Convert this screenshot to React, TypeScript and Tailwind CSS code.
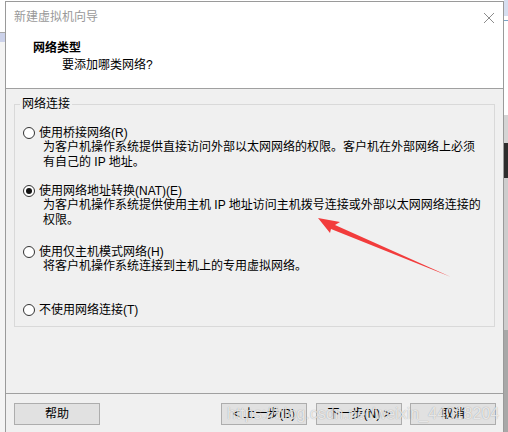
import React from "react";

const font = { fontFamily: '"Liberation Sans", "Noto Sans CJK SC", sans-serif' };

function Radio({ checked }: { checked?: boolean }) {
  return (
    <span className="w-[12px] h-[12px] rounded-full border border-[#333333] bg-white flex items-center justify-center shrink-0">
      {checked ? <span className="w-[6px] h-[6px] rounded-full bg-[#111111]" /> : null}
    </span>
  );
}

function Option({
  label,
  lines,
  checked,
  mt,
}: {
  label: string;
  lines: string[];
  checked?: boolean;
  mt: string;
}) {
  return (
    <div className={`flex flex-col ${mt}`}>
      <div className="flex items-center gap-[4px] h-[14px]">
        <Radio checked={checked} />
        <span className="text-[12px] leading-[14px] text-black whitespace-nowrap">{label}</span>
      </div>
      {lines.map((l, i) => (
        <div key={i} className="ml-[20px] text-[12px] leading-[15px] text-black whitespace-nowrap">
          {l}
        </div>
      ))}
    </div>
  );
}

function Btn({ children }: { children: React.ReactNode }) {
  return (
    <div className="w-[86px] h-[22px] border border-[#adadad] bg-[#e1e1e1] flex items-center justify-center text-[12px] text-black whitespace-nowrap">
      {children}
    </div>
  );
}

export default function App() {
  return (
    <div className="relative w-[508px] h-[432px] overflow-hidden flex bg-white" style={font}>
      {/* left background strip */}
      <div className="w-[5px] h-[432px] flex flex-col shrink-0">
        <div className="h-[32px] bg-white" />
        <div className="h-[1px] bg-[#a8a8a8]" />
        <div className="h-[9px] bg-[#ccd2ea]" />
        <div className="flex-1 bg-[#f4f4f4]" />
      </div>

      {/* dialog */}
      <div className="w-[499px] h-[431px] mt-[1px] border-l border-r border-t border-[#9a9a9a] flex flex-col shrink-0">
        {/* title bar */}
        <div className="h-[31px] bg-white flex items-center justify-between pl-[8px] pr-[8px]">
          <span className="text-[12px] leading-[15px] text-[#999999]">新建虚拟机向导</span>
          <svg width="12" height="12" viewBox="0 0 12 12">
            <path d="M1 1 L11 11 M11 1 L1 11" stroke="#8c8c8c" strokeWidth="1" fill="none" />
          </svg>
        </div>

        {/* header */}
        <div className="h-[56px] bg-white border-b border-[#a0a0a0] flex flex-col pt-[8px]">
          <div className="pl-[27px] text-[12px] leading-[15px] font-bold text-black">网络类型</div>
          <div className="pl-[56px] mt-[2px] text-[12px] leading-[15px] text-black">要添加哪类网络?</div>
        </div>

        {/* body */}
        <div className="h-[304px] bg-[#f0f0f0] flex flex-col">
          <fieldset className="mt-[8px] mx-[8px] border border-[#d9d9d9]">
            <legend className="ml-[5px] px-[2px] text-[12px] leading-[15px] text-black">网络连接</legend>
            <div className="flex flex-col pl-[8px] pb-[9px]">
              <Option
                mt="mt-[14px]"
                label="使用桥接网络(R)"
                lines={[
                  "为客户机操作系统提供直接访问外部以太网网络的权限。客户机在外部网络上必须",
                  "有自己的 IP 地址。",
                ]}
              />
              <Option
                mt="mt-[14px]"
                checked
                label="使用网络地址转换(NAT)(E)"
                lines={[
                  "为客户机操作系统提供使用主机 IP 地址访问主机拨号连接或外部以太网网络连接的",
                  "权限。",
                ]}
              />
              <Option
                mt="mt-[17px]"
                label="使用仅主机模式网络(H)"
                lines={["将客户机操作系统连接到主机上的专用虚拟网络。"]}
              />
              <Option mt="mt-[29px]" label="不使用网络连接(T)" lines={[]} />
            </div>
          </fieldset>
        </div>

        {/* footer */}
        <div className="h-[39px] bg-[#f0f0f0] border-t border-[#a0a0a0] flex items-start pt-[9px] pl-[8px] pr-[7px]">
          <Btn>帮助</Btn>
          <div className="flex-1" />
          <div className="flex gap-[9px]">
            <Btn>&lt; 上一步(B)</Btn>
            <div className="flex gap-[8px]">
              <Btn>下一步(N) &gt;</Btn>
              <Btn>取消</Btn>
            </div>
          </div>
        </div>
      </div>

      {/* right background strip */}
      <div className="w-[4px] h-[432px] flex flex-col shrink-0">
        <div className="h-[16px] bg-[#d6def0]" />
        <div className="h-[4px] bg-white" />
        <div className="h-[1px] bg-[#7ba5c5]" />
        <div className="h-[94px] bg-white" />
        <div className="h-[28px] bg-[#d4d4d4]" />
        <div className="h-[35px] bg-[#2d2d2d]" />
        <div className="h-[152px] bg-[#cdcdcd]" />
        <div className="flex-1 bg-[#a8a8a8]" />
      </div>

      {/* red annotation arrow */}
      <svg className="absolute left-0 top-0 pointer-events-none" width="508" height="432" viewBox="0 0 508 432">
        <polygon
          points="318,218 340,222 335,225 451,277 331,229 330,233"
          fill="#f23c3c"
        />
      </svg>

      {/* watermark */}
      <div
        className="absolute left-[227px] top-[405px] text-[16px] leading-[18px] text-white/75 whitespace-nowrap pointer-events-none [text-shadow:0_0_1px_rgba(0,0,0,0.35)]"
        style={{ fontFamily: '"Liberation Sans", Arial, sans-serif' }}
      >
        https://blog.csdn.net/weixin_44018204
      </div>
    </div>
  );
}
